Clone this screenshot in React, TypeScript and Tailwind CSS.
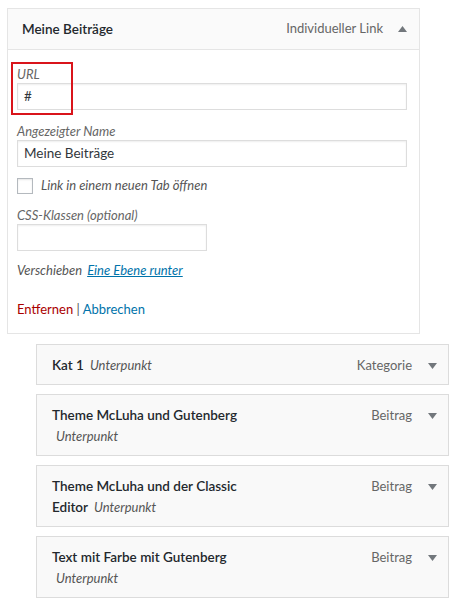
import React from 'react';

const FONT = "font-['Segoe_UI','Lato',sans-serif]";

interface MenuItem {
  lines: string[];
  sub: 'inline' | 'below';
  kind: string;
}

const ITEMS: MenuItem[] = [
  { lines: ['Kat 1'], sub: 'inline', kind: 'Kategorie' },
  { lines: ['Theme McLuha und Gutenberg'], sub: 'below', kind: 'Beitrag' },
  { lines: ['Theme McLuha und der Classic', 'Editor'], sub: 'inline', kind: 'Beitrag' },
  { lines: ['Text mit Farbe mit Gutenberg'], sub: 'below', kind: 'Beitrag' },
];

function Arrow({ up }: { up?: boolean }) {
  return (
    <svg width="9" height="6" viewBox="0 0 9 6" className="shrink-0">
      <path d={up ? 'M0 6 L4.5 0 L9 6 Z' : 'M0 0 L9 0 L4.5 6 Z'} fill="#72777c" />
    </svg>
  );
}

function Field({ label, value, narrow }: { label: string; value?: string; narrow?: boolean }) {
  return (
    <div>
      <div className="h-[17px] text-[13px] leading-[17px] italic text-[#666]">{label}</div>
      <div
        className={`h-[27px] ${narrow ? 'w-[190px]' : 'w-full'} border border-[#ddd] bg-white shadow-[inset_0_1px_2px_rgba(0,0,0,0.07)] px-[6px] text-[13.5px] leading-[25px] text-[#32373c]`}
      >
        {value}
      </div>
    </div>
  );
}

function ItemRow({ item }: { item: MenuItem }) {
  const sub = <span className="italic font-normal text-[13px] text-[#555]">Unterpunkt</span>;
  return (
    <div className="w-[413px] ml-[36px] border border-[#dcdcdc] bg-[#f9f9f9] pt-[10px] pb-[8px] pl-[15px] pr-[11px] flex items-start">
      <div className="flex-1 text-[13.5px] leading-[21px] text-[#23282d]">
        {item.lines.map((l, i) => (
          <div key={i}>
            <span className="font-semibold">{l}</span>
            {item.sub === 'inline' && i === item.lines.length - 1 && <span className="ml-[6px]">{sub}</span>}
          </div>
        ))}
        {item.sub === 'below' && <div className="pl-[4px]">{sub}</div>}
      </div>
      <div className="flex items-center h-[21px] gap-[16px]">
        <span className="text-[13px] text-[#666]">{item.kind}</span>
        <Arrow />
      </div>
    </div>
  );
}

export default function App() {
  return (
    <div className={`${FONT} w-[459px] h-[602px] bg-white pt-[8px]`}>
      {/* open menu item */}
      <div className="ml-[7px] w-[413px] border border-[#e5e5e5] bg-white">
        <div className="h-[41px] bg-[#fafafa] border-b border-[#e5e5e5] pl-[14px] pr-[12px] flex items-center">
          <span className="flex-1 text-[13.5px] font-semibold text-[#23282d]">Meine Beiträge</span>
          <span className="text-[13px] text-[#666] mr-[15px]">Individueller Link</span>
          <Arrow up />
        </div>
        <div className="pl-[9px] pr-[12px] pt-[16px] pb-[15px]">
          <div className="relative">
            <div className="absolute left-[-6px] top-[-4px] w-[62px] h-[53px] border-2 border-[#d9141b] pointer-events-none" />
            <Field label="URL" value="#" />
          </div>
          <div className="mt-[13px]">
            <Field label="Angezeigter Name" value="Meine Beiträge" />
          </div>
          <div className="mt-[11px] flex items-center h-[16px]">
            <div className="w-[16px] h-[16px] border border-[#b4b9be] bg-white shadow-[inset_0_1px_2px_rgba(0,0,0,0.1)]" />
            <span className="ml-[8px] text-[13px] italic text-[#555]">Link in einem neuen Tab öffnen</span>
          </div>
          <div className="mt-[13px]">
            <Field label="CSS-Klassen (optional)" narrow />
          </div>
          <div className="mt-[10px] h-[18px] text-[13px] leading-[18px] italic text-[#555]">
            Verschieben <a className="ml-[2px] text-[#0073aa] underline">Eine Ebene runter</a>
          </div>
          <div className="mt-[21px] h-[18px] text-[13px] leading-[18px]">
            <span className="text-[#a00]">Entfernen</span>
            <span className="text-[#555]"> | </span>
            <span className="text-[#0073aa]">Abbrechen</span>
          </div>
        </div>
      </div>

      {/* child items */}
      <div className="mt-[10px] flex flex-col gap-[9px]">
        {ITEMS.map((it, i) => (
          <ItemRow key={i} item={it} />
        ))}
      </div>
    </div>
  );
}
